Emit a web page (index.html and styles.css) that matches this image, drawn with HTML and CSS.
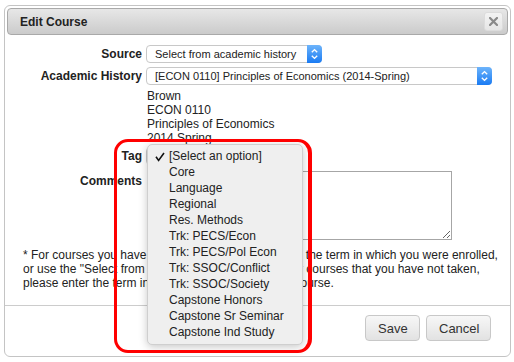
FILE: index.html
```html
<!DOCTYPE html>
<html>
<head>
<meta charset="utf-8">
<link rel="stylesheet" href="styles.css">
</head>
<body>
<div class="dialog">
  <div class="titlebar">
    <span class="title">Edit Course</span>
    <span class="close"><svg width="9" height="9" viewBox="0 0 9 9"><path d="M1 1L8 8M8 1L1 8" stroke="#8a8a8a" stroke-width="2.2" stroke-linecap="square"/></svg></span>
  </div>
  <div class="form">
    <div class="row">
      <span class="label">Source</span>
      <div class="select sel-source"><span class="sel-text">Select from academic history</span><span class="arrow"><svg width="15" height="18" viewBox="0 0 15 18"><path d="M4.8 7.2L7.5 4.6L10.2 7.2M4.8 10.8L7.5 13.4L10.2 10.8" fill="none" stroke="#fff" stroke-width="1.4"/></svg></span></div>
    </div>
    <div class="row row-gap">
      <span class="label">Academic History</span>
      <div class="select sel-history"><span class="sel-text">[ECON 0110] Principles of Economics (2014-Spring)</span><span class="arrow"><svg width="15" height="18" viewBox="0 0 15 18"><path d="M4.8 7.2L7.5 4.6L10.2 7.2M4.8 10.8L7.5 13.4L10.2 10.8" fill="none" stroke="#fff" stroke-width="1.4"/></svg></span></div>
    </div>
    <div class="info">
      <div>Brown</div>
      <div>ECON 0110</div>
      <div>Principles of Economics</div>
      <div>2014 Spring</div>
    </div>
    <div class="row row-tag">
      <span class="label">Tag</span>
      <div class="select sel-tag"><span class="sel-text">[Select an option]</span></div>
    </div>
    <div class="row row-comments">
      <span class="label label-top">Comments</span>
      <textarea class="comments"></textarea>
    </div>
    <p class="note">* For courses you have taken at Brown, please enter the term in which you were enrolled,<br>or use the "Select from academic history" option. For courses that you have not taken,<br>please enter the term in which you plan to take the course.</p>
  </div>
  <div class="footer">
    <button class="btn btn-save">Save</button>
    <button class="btn btn-cancel">Cancel</button>
  </div>
  <ul class="menu">
    <li class="checked"><svg class="check" width="10" height="10" viewBox="0 0 10 10"><path d="M1 4.8L3.6 8.4L9 1" fill="none" stroke="#111" stroke-width="1.6"/></svg>[Select an option]</li>
    <li>Core</li>
    <li>Language</li>
    <li>Regional</li>
    <li>Res. Methods</li>
    <li>Trk: PECS/Econ</li>
    <li>Trk: PECS/Pol Econ</li>
    <li>Trk: SSOC/Conflict</li>
    <li>Trk: SSOC/Society</li>
    <li>Capstone Honors</li>
    <li>Capstone Sr Seminar</li>
    <li>Capstone Ind Study</li>
  </ul>
  <div class="annot"></div>
</div>
</body>
</html>
```
FILE: styles.css
```css
body {
  margin: 0;
  background: #fff;
  font-family: "Liberation Sans", Arial, Helvetica, sans-serif;
  font-size: 12px;
  color: #222;
}

.dialog {
  position: relative;
  margin: 5px 0 0 4px;
  width: 507px;
  height: 352px;
  box-sizing: border-box;
  border: 1px solid #c4c4c4;
  border-radius: 6px;
  background: #fff;
  display: flex;
  flex-direction: column;
}

.titlebar {
  margin: 2px 2px 0;
  height: 27px;
  box-sizing: border-box;
  border: 1px solid #a9a9a9;
  border-radius: 4px;
  background: linear-gradient(#e7e7e7, #cbcbcb);
  display: flex;
  align-items: center;
  justify-content: space-between;
  padding: 0 4px 0 12px;
}

.title {
  font-weight: bold;
  font-size: 12px;
  color: #222;
}

.close {
  width: 19px;
  height: 19px;
  box-sizing: border-box;
  border: 1px solid #dcdcdc;
  border-radius: 3px;
  background: linear-gradient(#f3f3f3, #e6e6e6);
  display: flex;
  align-items: center;
  justify-content: center;
}

.form {
  padding-top: 10px;
}

.row {
  display: flex;
  align-items: center;
  gap: 4px;
  height: 18px;
}

.row-gap {
  margin-top: 4px;
}

.label {
  width: 137px;
  flex: none;
  text-align: right;
  font-weight: bold;
  line-height: 14px;
}

.select {
  display: flex;
  height: 18px;
  box-sizing: border-box;
  border: 1px solid #c8c8c8;
  border-radius: 4px;
  background: #fff;
}

.sel-text {
  flex: 1;
  padding-left: 8px;
  font-size: 11px;
  line-height: 16px;
  white-space: nowrap;
  overflow: hidden;
}

.arrow {
  width: 15px;
  margin: -1px -1px -1px 0;
  border-radius: 0 4px 4px 0;
  background: linear-gradient(#6db4fb, #1a7bf3);
  display: flex;
}

.sel-source { width: 176px; }
.sel-history { width: 346px; }
.sel-tag { width: 150px; }

.info {
  margin: 4px 0 0 142px;
  line-height: 14px;
}

.row-tag {
  margin-top: 2px;
}

.row-comments {
  margin-top: 6px;
  height: auto;
  align-items: flex-start;
}

.label-top {
  padding-top: 3px;
}

.comments {
  width: 305px;
  height: 69px;
  box-sizing: border-box;
  margin: 0 0 0 1px;
  border: 1px solid #a6a6a6;
  border-radius: 0;
  padding: 2px;
  font: inherit;
}

.note {
  margin: 8px 0 0;
  padding-left: 18px;
  line-height: 14px;
  white-space: nowrap;
}

.footer {
  margin-top: auto;
  border-top: 1px solid #cccccc;
  padding: 9px 19px 15px 0;
  display: flex;
  justify-content: flex-end;
  gap: 6px;
}

.btn {
  height: 26px;
  box-sizing: border-box;
  padding: 0 12px;
  border: 1px solid #c8c8c8;
  border-radius: 4px;
  background: linear-gradient(#f7f7f7, #e2e2e2);
  font-family: "Liberation Sans", Arial, sans-serif;
  font-size: 13px;
  color: #333;
}

.btn-save { width: 55px; }
.btn-cancel { width: 65px; }

.menu {
  position: absolute;
  left: 142px;
  top: 138px;
  width: 156px;
  box-sizing: border-box;
  margin: 0;
  padding: 3px 0 4px;
  list-style: none;
  background: #efefef;
  border: 1px solid #cfcfcf;
  border-radius: 5px;
  box-shadow: 0 2px 8px rgba(0, 0, 0, 0.22);
}

.menu li {
  position: relative;
  height: 16px;
  line-height: 16px;
  padding-left: 21px;
  color: #222;
  white-space: nowrap;
}

.check {
  position: absolute;
  left: 7px;
  top: 4px;
}

.annot {
  position: absolute;
  left: 109px;
  top: 133px;
  width: 198px;
  height: 214px;
  box-sizing: border-box;
  border: 3px solid #ff0000;
  border-width: 3.5px 4px 3px 3px;
  border-radius: 14px;
  pointer-events: none;
}
```
